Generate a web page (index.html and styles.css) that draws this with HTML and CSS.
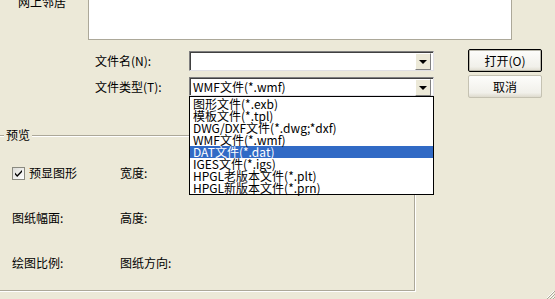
FILE: index.html
```html
<html>

<head>
  <meta charset="utf-8" />
  <link rel="stylesheet" href="styles.css">
</head>

<body>
  <div class="top">
    <div class="places">网上邻居</div>
    <div class="filelist"></div>
  </div>

  <div class="form">
    <label class="lbl">文件名(N):</label>
    <div class="combo">
      <span class="combo-text"></span>
      <span class="arrow"></span>
    </div>
    <button class="btn default">打开(O)</button>

    <label class="lbl">文件类型(T):</label>
    <div class="combo-wrap">
      <div class="combo">
        <span class="combo-text">WMF文件(*.wmf)</span>
        <span class="arrow"></span>
      </div>
      <ul class="droplist">
        <li>图形文件(*.exb)</li>
        <li>模板文件(*.tpl)</li>
        <li>DWG/DXF文件(*.dwg;*dxf)</li>
        <li>WMF文件(*.wmf)</li>
        <li class="selected">DAT文件(*.dat)</li>
        <li>IGES文件(*.igs)</li>
        <li>HPGL老版本文件(*.plt)</li>
        <li>HPGL新版本文件(*.prn)</li>
      </ul>
    </div>
    <button class="btn">取消</button>
  </div>

  <div class="group">
    <span class="legend">预览</span>
    <div class="group-grid">
      <div class="check-row">
        <span class="checkbox">
          <svg width="11" height="11" viewBox="0 0 11 11"><path d="M2 4.5 L4.2 7 L9 2 L9 4 L4.2 9 L2 6.5 Z" fill="#000"/></svg>
        </span>
        <span>预显图形</span>
      </div>
      <div>宽度:</div>
      <div>图纸幅面:</div>
      <div>高度:</div>
      <div>绘图比例:</div>
      <div>图纸方向:</div>
    </div>
  </div>

  <svg class="grip" width="9" height="9" viewBox="0 0 9 9">
    <path d="M8 1 L1 8 M8 4 L4 8 M8 7 L7 8" stroke="#fff" stroke-width="1"/>
    <path d="M9 1 L1 9 M9 4 L4 9 M9 7 L7 9" stroke="#aca899" stroke-width="1"/>
  </svg>
</body>

</html>
```

FILE: styles.css
```css
body {
  margin: 0;
  width: 555px;
  height: 299px;
  overflow: hidden;
  position: relative;
  background-color: #ece9d8;
  font-family: "Noto Sans CJK SC", "Liberation Sans", sans-serif;
  font-size: 12px;
  color: #000;
}

.top {
  display: flex;
  height: 40px;
}

.places {
  width: 70px;
  padding-left: 18px;
  margin-top: -5px;
  line-height: 14px;
}

.filelist {
  width: 422px;
  height: 39px;
  background-color: #fff;
  border-left: 1px solid #aca899;
  border-right: 1px solid #aca899;
  border-bottom: 1px solid #aca899;
}

.form {
  display: grid;
  grid-template-columns: 94px 245px 74px;
  grid-template-rows: 23px 23px;
  row-gap: 3px;
  margin: 9px 0 0 95px;
  align-items: center;
}

.form .btn {
  margin-left: 34px;
}

.lbl {
  line-height: 14px;
}

.combo-wrap {
  position: relative;
}

.combo {
  display: flex;
  align-items: center;
  justify-content: space-between;
  box-sizing: border-box;
  height: 20px;
  background-color: #fff;
  border: 1px solid #7f7f7f;
  border-right-color: #e0dfe3;
  border-bottom-color: #e0dfe3;
  box-shadow: inset 1px 1px 0 #404040;
  padding: 1px 2px 0 3px;
}

.combo-wrap .combo {
  height: 19px;
}

.combo-text {
  line-height: 14px;
  white-space: nowrap;
}

.arrow {
  position: relative;
  width: 14px;
  height: 15px;
  background-color: #ece9d8;
  border: 1px solid;
  border-color: #fff #808080 #808080 #fff;
}

.arrow::after {
  content: "";
  position: absolute;
  left: 3px;
  top: 6px;
  border-left: 4px solid transparent;
  border-right: 4px solid transparent;
  border-top: 4px solid #000;
}

.droplist {
  position: absolute;
  top: 100%;
  left: 0;
  width: 245px;
  box-sizing: border-box;
  margin: 0;
  padding: 1px 0 0 0;
  list-style: none;
  background-color: #fff;
  border: 1px solid #000;
  z-index: 2;
}

.droplist li {
  height: 12px;
  line-height: 12px;
  padding-left: 3px;
  white-space: nowrap;
}

.droplist li.selected {
  background-color: #316ac5;
  color: #fff;
}

.btn {
  height: 23px;
  width: 74px;
  padding: 0;
  font-family: inherit;
  font-size: 12px;
  color: #000;
  background: linear-gradient(#fdfdfb, #f1f0ea 80%, #dedbce);
  border: 1px solid #c5c2b2;
  border-radius: 2px;
}

.btn.default {
  border-color: #000;
  box-shadow: inset 0 0 0 1px #b9b7ab;
}

.group {
  position: relative;
  margin: 37px 0 0 -2px;
  width: 415px;
  height: 154px;
  border: 1px solid #aca899;
  box-shadow: 1px 1px 0 #fff, inset 1px 1px 0 #fff;
}

.legend {
  position: absolute;
  top: -8px;
  left: 5px;
  padding: 0 2px;
  line-height: 14px;
  background-color: #ece9d8;
}

.group-grid {
  display: grid;
  grid-template-columns: 108px 200px;
  grid-auto-rows: 16px;
  row-gap: 29px;
  padding: 29px 0 0 13px;
  align-items: center;
  line-height: 14px;
}

.check-row {
  display: flex;
  align-items: center;
  gap: 4px;
}

.checkbox {
  display: flex;
  align-items: center;
  justify-content: center;
  width: 11px;
  height: 11px;
  background: linear-gradient(135deg, #dcdcd7, #fff);
  border: 1px solid #8a8a80;
}

.grip {
  position: absolute;
  right: 0;
  bottom: 0;
}
```
